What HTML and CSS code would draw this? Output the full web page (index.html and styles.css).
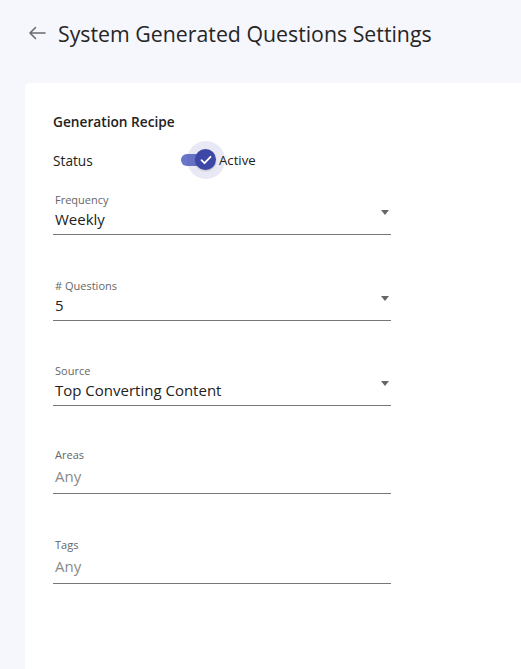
FILE: index.html
```html
<!DOCTYPE html>
<html lang="en">
<head>
<meta charset="utf-8">
<title>System Generated Questions Settings</title>
<link rel="stylesheet" href="styles.css">
</head>
<body>
<div class="page">
  <header class="header">
    <svg class="back" width="18" height="14" viewBox="0 0 18 14" aria-hidden="true">
      <path d="M17 7H2M7.5 1.5L2 7l5.5 5.5" fill="none" stroke="#6b6b6b" stroke-width="1.6" stroke-linecap="round" stroke-linejoin="round"/>
    </svg>
    <h1 class="title">System Generated Questions Settings</h1>
  </header>
  <main class="card">
    <h2 class="section-title">Generation Recipe</h2>
    <div class="status-row">
      <span class="status-label">Status</span>
      <span class="toggle">
        <span class="track"></span>
        <span class="halo"></span>
        <span class="thumb">
          <svg width="12" height="10" viewBox="0 0 12 10" aria-hidden="true"><path d="M1.5 5.2l3 3L10.5 1.8" fill="none" stroke="#fff" stroke-width="1.8" stroke-linecap="round" stroke-linejoin="round"/></svg>
        </span>
      </span>
      <span class="toggle-text">Active</span>
    </div>

    <div class="field field-first">
      <div class="label">Frequency</div>
      <div class="value">Weekly</div>
      <span class="caret"></span>
    </div>
    <div class="field">
      <div class="label"># Questions</div>
      <div class="value">5</div>
      <span class="caret"></span>
    </div>
    <div class="field field-source">
      <div class="label">Source</div>
      <div class="value">Top Converting Content</div>
      <span class="caret"></span>
    </div>
    <div class="field field-text field-areas">
      <div class="label">Areas</div>
      <div class="value placeholder">Any</div>
    </div>
    <div class="field field-text field-tags">
      <div class="label">Tags</div>
      <div class="value placeholder">Any</div>
    </div>
  </main>
</div>
</body>
</html>
```
FILE: styles.css
```css
* { box-sizing: border-box; }
html, body { margin: 0; padding: 0; }
body {
  background: #f6f6fd;
  font-family: "Open Sans", "Lato", sans-serif;
  color: #222;
  width: 521px;
  height: 669px;
  overflow: hidden;
}
.page { display: flex; flex-direction: column; height: 669px; }
.header {
  display: flex;
  align-items: center;
  height: 66px;
  padding-left: 28px;
}
.back { flex: none; margin-right: 12px; margin-top: -1px; }
.title {
  margin: 0;
  font-size: 21.3px;
  font-weight: 400;
  color: #262626;
  letter-spacing: 0;
}
.card {
  margin-top: 17px;
  margin-left: 25px;
  flex: 1;
  background: #fff;
  border-top-left-radius: 5px;
  padding: 30px 0 0 28px;
}
.section-title {
  margin: 0;
  font-size: 13.7px;
  font-weight: 600;
  color: #222;
  line-height: 18px;
}
.status-row {
  display: flex;
  align-items: center;
  height: 40px;
  margin-top: 9px;
}
.status-label {
  font-size: 13.7px;
  width: 127px;
  color: #222;
}
.toggle {
  position: relative;
  width: 37px;
  height: 40px;
  flex: none;
}
.track {
  position: absolute;
  left: 1px;
  top: 14px;
  width: 30px;
  height: 12px;
  border-radius: 6px;
  background: #6a74c9;
}
.halo {
  position: absolute;
  left: 7px;
  top: 1px;
  width: 38px;
  height: 38px;
  border-radius: 50%;
  background: rgba(80, 88, 170, 0.13);
}
.thumb {
  position: absolute;
  left: 15px;
  top: 9px;
  width: 21px;
  height: 21px;
  border-radius: 50%;
  background: #3d47a6;
  display: flex;
  align-items: center;
  justify-content: center;
  box-shadow: 0 1px 2px rgba(0,0,0,0.2);
}
.toggle-text {
  position: relative;
  font-size: 13.2px;
  color: #222;
  margin-left: 2px;
}
.field {
  position: relative;
  width: 338px;
  border-bottom: 1px solid #777;
  margin-top: 44px;
  height: 42px;
}
.field-first { margin-top: 13px; }
.field-source { margin-top: 43px; }
.field-text { height: 46px; }
.field-areas { margin-top: 42px; }
.field-tags { margin-top: 44px; }
.label {
  font-size: 11px;
  color: #666;
  line-height: 14px;
  padding-left: 2px;
}
.value {
  font-size: 15px;
  line-height: 22px;
  margin-top: 1px;
  color: #222;
  padding-left: 2px;
}
.field-text .value { margin-top: 3px; }
.placeholder { color: #8a8a8a; }
.caret {
  position: absolute;
  right: 2px;
  top: 17px;
  width: 0;
  height: 0;
  border-left: 4.5px solid transparent;
  border-right: 4.5px solid transparent;
  border-top: 5px solid #666;
}
```
